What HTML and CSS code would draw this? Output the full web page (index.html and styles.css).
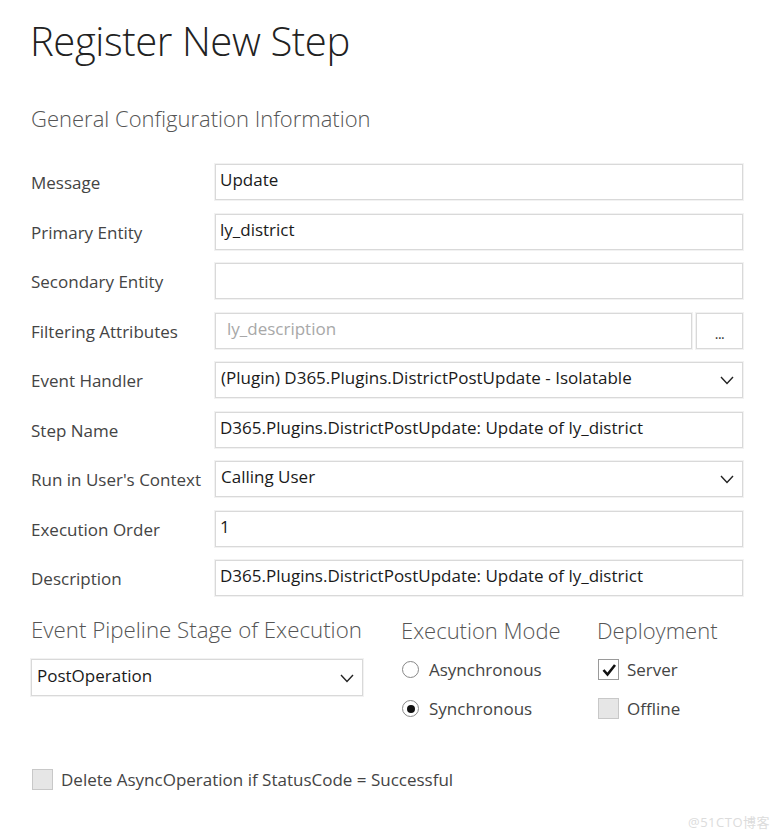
FILE: index.html
```html
<!DOCTYPE html>
<html>
<head>
<meta charset="utf-8">
<link rel="stylesheet" href="styles.css">
</head>
<body>
<div class="page">
  <h1 class="title">Register New Step</h1>
  <h2 class="section">General Configuration Information</h2>
  <div class="form">
    <label class="lbl">Message</label>
    <div class="box"><span class="val">Update</span></div>

    <label class="lbl">Primary Entity</label>
    <div class="box"><span class="val">ly_district</span></div>

    <label class="lbl">Secondary Entity</label>
    <div class="box"></div>

    <label class="lbl">Filtering Attributes</label>
    <div class="pair">
      <div class="box grow"><span class="val ph">ly_description</span></div>
      <div class="box btn"><span class="dots">...</span></div>
    </div>

    <label class="lbl">Event Handler</label>
    <div class="box sel"><span class="val">(Plugin) D365.Plugins.DistrictPostUpdate - Isolatable</span>
      <svg class="chev" width="14" height="9" viewBox="0 0 14 9"><polyline points="1,1 7,7.5 13,1" fill="none" stroke="#222" stroke-width="1.4"/></svg>
    </div>

    <label class="lbl">Step Name</label>
    <div class="box"><span class="val">D365.Plugins.DistrictPostUpdate: Update of ly_district</span></div>

    <label class="lbl">Run in User's Context</label>
    <div class="box sel"><span class="val">Calling User</span>
      <svg class="chev" width="14" height="9" viewBox="0 0 14 9"><polyline points="1,1 7,7.5 13,1" fill="none" stroke="#222" stroke-width="1.4"/></svg>
    </div>

    <label class="lbl">Execution Order</label>
    <div class="box"><span class="val">1</span></div>

    <label class="lbl">Description</label>
    <div class="box"><span class="val">D365.Plugins.DistrictPostUpdate: Update of ly_district</span></div>
  </div>

  <div class="lower">
    <div class="col stage">
      <h2 class="section">Event Pipeline Stage of Execution</h2>
      <div class="box sel wide"><span class="val">PostOperation</span>
        <svg class="chev" width="14" height="9" viewBox="0 0 14 9"><polyline points="1,1 7,7.5 13,1" fill="none" stroke="#222" stroke-width="1.4"/></svg>
      </div>
    </div>
    <div class="col mode">
      <h2 class="section">Execution Mode</h2>
      <div class="opt"><span class="radio"></span><span>Asynchronous</span></div>
      <div class="opt"><span class="radio on"></span><span>Synchronous</span></div>
    </div>
    <div class="col deploy">
      <h2 class="section">Deployment</h2>
      <div class="opt"><span class="check on"><svg width="18" height="18" viewBox="0 0 18 18"><polyline points="3.5,9 7.5,13.5 15,4" fill="none" stroke="#111" stroke-width="2.6"/></svg></span><span>Server</span></div>
      <div class="opt"><span class="check off"></span><span>Offline</span></div>
    </div>
  </div>

  <div class="opt delete"><span class="check off"></span><span>Delete AsyncOperation if StatusCode = Successful</span></div>
</div>
<div class="watermark">@51CTO博客</div>
</body>
</html>
```

FILE: styles.css
```css
html, body {
  margin: 0;
  padding: 0;
  background: #fff;
}
body {
  font-family: "Open Sans", "Noto Sans CJK SC", sans-serif;
  color: #333;
  width: 780px;
  height: 839px;
  position: relative;
  overflow: hidden;
}
.page {
  padding: 15px 37px 0 31px;
}
.title {
  margin: 0 0 0 -1px;
  font-weight: 300;
  font-size: 40px;
  line-height: 52px;
  color: #222;
  letter-spacing: -0.4px;
}
.section {
  margin: 0;
  font-weight: 300;
  font-size: 22px;
  line-height: 30px;
  color: #555;
}
.title + .section {
  margin-top: 36px;
}
.form {
  margin-top: 31px;
  display: grid;
  grid-template-columns: 184px 528px;
  row-gap: 13.5px;
}
.lbl {
  box-sizing: border-box;
  height: 36px;
  font-size: 17px;
  line-height: 34px;
  padding-top: 2px;
  color: #444;
  white-space: nowrap;
}
.box {
  box-sizing: border-box;
  height: 36px;
  border: 1px solid #d9d9d9;
  box-shadow: 0 0 0 1px #f2f2f2;
  background: #fff;
  position: relative;
  display: flex;
  align-items: flex-start;
}
.val {
  font-size: 17px;
  line-height: 24px;
  padding: 3px 0 0 4px;
  color: #1a1a1a;
  white-space: nowrap;
}
.ph {
  color: #a8a8a8;
  padding-left: 11px;
}
.pair {
  display: flex;
  gap: 4px;
}
.grow {
  flex: 1;
}
.btn {
  width: 47px;
  flex: none;
  justify-content: center;
  align-items: flex-end;
}
.dots {
  font-size: 14px;
  line-height: 14px;
  padding-bottom: 7px;
  color: #333;
  letter-spacing: -0.5px;
}
.sel .val {
  padding-left: 5px;
}
.chev {
  position: absolute;
  right: 8px;
  top: 13px;
}
.lower {
  margin-top: 19px;
  display: flex;
}
.col {
  flex: none;
}
.col.stage {
  width: 332px;
}
.col.mode {
  margin-left: 38px;
  width: 196px;
}
.col.deploy {
  width: 140px;
}
.stage .section {
  font-size: 22.3px;
}
.box.wide {
  margin-top: 14px;
  width: 332px;
  height: 37px;
}
.wide .val {
  padding-top: 4px;
}
.wide .chev {
  top: 14px;
}
.opt {
  display: flex;
  align-items: center;
  font-size: 17px;
  color: #444;
  height: 39px;
}
.mode .opt:first-of-type, .deploy .opt:first-of-type {
  margin-top: 5px;
}
.radio {
  box-sizing: border-box;
  width: 17px;
  height: 17px;
  border: 1px solid #888;
  border-radius: 50%;
  margin-left: 1px;
  margin-right: 10px;
  position: relative;
}
.radio.on::after {
  content: "";
  position: absolute;
  left: 3.5px;
  top: 3.5px;
  width: 8px;
  height: 8px;
  border-radius: 50%;
  background: #111;
}
.check {
  box-sizing: border-box;
  width: 21px;
  height: 21px;
  margin-left: 1px;
  margin-right: 8px;
  display: flex;
  align-items: center;
  justify-content: center;
}
.check.on {
  border: 1px solid #9a9a9a;
  background: #fff;
}
.check.off {
  border: 1px solid #c8c8c8;
  background: #e6e6e6;
}
.delete {
  margin-top: 32px;
}
.watermark {
  position: absolute;
  right: 10px;
  bottom: 8px;
  font-size: 13px;
  color: #dcdcdc;
  letter-spacing: 0.5px;
}
```
